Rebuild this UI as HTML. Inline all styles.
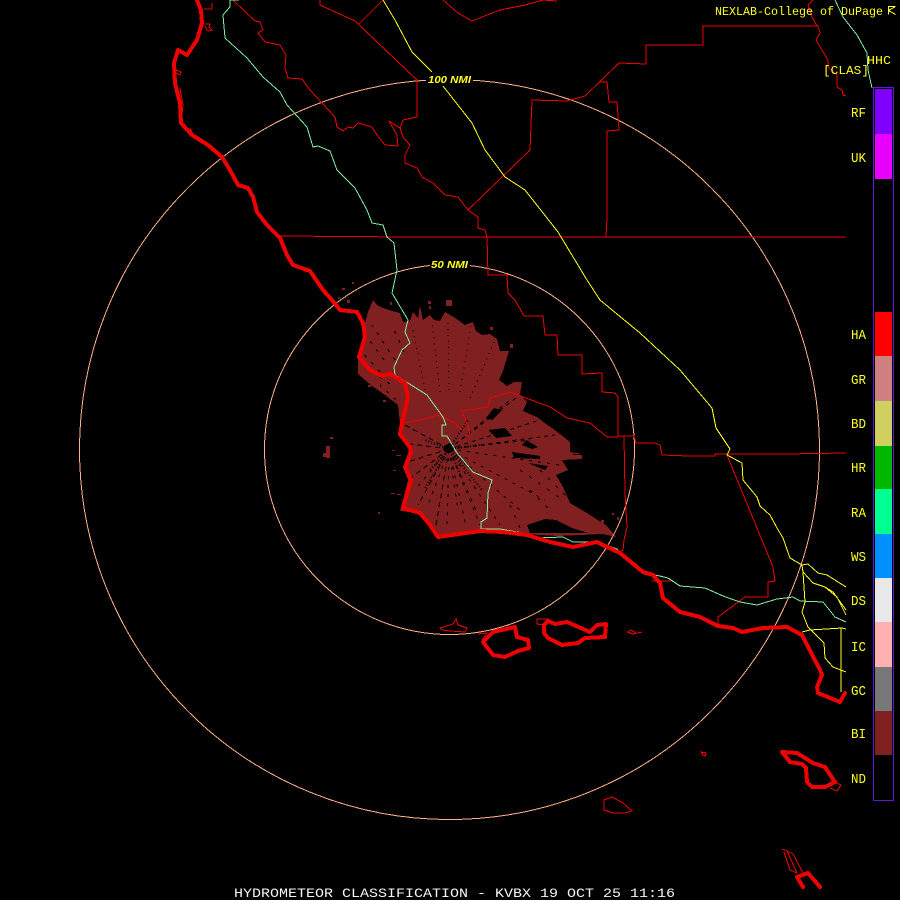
<!DOCTYPE html>
<html><head><meta charset="utf-8"><title>KVBX Hydrometeor Classification</title>
<style>html,body{margin:0;padding:0;background:#000;width:900px;height:900px;overflow:hidden}svg{display:block}
text{font-family:"Liberation Mono",monospace;fill:#ffff20}</style></head><body>
<svg width="900" height="900" viewBox="0 0 900 900" xmlns="http://www.w3.org/2000/svg">
<rect width="900" height="900" fill="#000"/>
<g shape-rendering="crispEdges">
<!-- blob -->
<path fill="#802020" d="M358 357L362 340L365 323L368 312L373 300L377 305L383 308L392 311L400 313L403 322L410 321L413 312L418 318L420 306L423 320L430 315L434 320L440 321L445 312L452 316L458 320L465 325L473 322L476 331L482 335L490 334L497 339L500 351L509 351L505 364L503 371L499 380L507 386L514 382L522 382L520 395L527 402L523 411L537 417L546 424L552 428L560 434L570 442L570 452L582 454L582 459L562 460L568 470L556 475L563 487L570 503L587 513L607 526L616 537L603 534L580 535L557 536L525 534L480 531L438 538L430 525L418 513L400 511L408 480L403 467L409 450L398 435L400 423L398 405L385 395L372 386L358 374Z"/>
<path fill="#802020" d="M347 300h3v3h-3zM342 288h3v2h-3zM352 282h2v2h-2zM338 297h2v2h-2zM428 301h3v3h-3zM446 300h6v6h-6zM390 302h2v3h-2zM429 306h2v3h-2zM490 327h3v3h-3zM510 344h3v4h-3zM326 446h4v12h-4zM323 453h7v4h-7zM330 437h3v2h-3zM601 520h3v3h-3zM617 517h2v3h-2zM612 513h2v2h-2zM392 378h3v2h-3zM362 375h2v2h-2zM368 385h3v2h-3zM383 400h3v2h-3zM392 450h3v1h-3zM393 470h3v1h-3zM397 494h4v1h-4zM378 512h2v2h-2zM396 455h5v1h-5zM391 493h4v1h-4z"/>
<!-- black gaps -->
<path fill="#000" d="M527 525L545 519L556 520L572 528L588 533L530 533ZM488 430L505 428L512 436L496 438ZM512 452L540 456L540 459L514 458ZM486 418L494 408L502 410L492 420ZM444 446l6-3 5 4-2 5-6 1-4-3zM526 440L538 447L532 449L522 445ZM528 463L548 466L545 470ZM582 454h-9v1h9z"/>
<g stroke="#000" stroke-width="1" fill="none">
<path stroke-dasharray="1 5" d="M449 390L448 318M460 392L471 325M470 398L495 340M440 392L432 322M425 390L412 325"/>
<path stroke-dasharray="3 7" d="M404 352L392 325M395 360L372 325M384 360L366 336M380 372L362 352M390 384L366 368M396 400L380 385"/>
<path stroke-dasharray="5 4" d="M449 449L403 443M449 449L405 425M449 449L407 462M449 449L408 480M449 449L418 505M449 449L436 525"/>
<path stroke-dasharray="3 6" d="M449 449L447 528M449 449L466 526M449 449L480 525M449 449L500 525M449 449L520 510M449 449L545 500M449 449L560 465M449 449L415 490M449 449L428 505M449 449L458 510M449 449L476 510"/>
<path stroke-dasharray="4 4" d="M449 449L530 440M449 449L510 400M449 449L540 420M449 449L555 435M449 449L520 395"/>
<path stroke-dasharray="1 2" stroke-width="2" d="M449 449L468 420M449 449L480 445M449 449L472 470M449 449L430 470M449 449L425 440M449 449L462 478M449 449L482 490M449 449L425 488"/>
<path stroke-dasharray="3 8" d="M540 470L575 505M520 470L560 498M510 505L520 528M530 490L550 510"/>
</g>
<!-- rings -->
<g fill="none" stroke="#ffb088" stroke-width="1">
<circle cx="449.5" cy="449.5" r="370"/>
<circle cx="449.5" cy="449.5" r="185"/>
</g>
<rect x="426" y="74" width="47" height="10" fill="#000"/>
<rect x="430" y="259" width="40" height="10" fill="#000"/>
<!-- thin red -->
<g fill="none" stroke="#f00000" stroke-width="1">
<path d="M320 0L320 5L355 21L417 80L417 117L403 120L400 128L403 137L410 145L405 155L405 163L417 168L422 177L433 183L445 195L458 197L468 210L478 217L478 228L485 230L487 237L488 275L507 275L508 293L515 300L524 316L543 316L545 335L557 335L558 355L582 355L582 374L602 373L602 392L615 393L618 397L618 436L634 436L636 443L655 443L660 445L662 455L688 456L715 456L715 454L785 454L846 453"/>
<path d="M233 0L255 21L260 22L263 30L258 33L265 42L280 45L286 55L285 68L288 78L302 79L310 90L335 117L337 127L343 131L348 127L353 128L358 123L372 127L377 135L385 145L398 146L397 135L389 121L400 128"/>
<path stroke="#b00000" d="M383 0L358 25"/>
<path d="M443 0L458 13L472 21L487 15L500 10L525 5L543 0L557 1"/>
<path d="M468 210L530 150L532 100L567 101L585 96L619 63L646 64L646 45L703 45L703 26L818 26L820 33L816 40L828 60L828 67L837 75L837 87L842 90L843 95L846 96"/>
<path d="M817 26L812 17L808 5L813 0"/>
<path d="M600 82L607 82L609 102L617 102L619 130L607 131L607 218L606 237"/>
<path d="M280 236L410 237L846 237"/>
<path d="M618 437L607 437L590 423L567 418L550 407L510 392L490 398L488 407L462 411L468 427L470 435L467 435"/>
<path d="M403 423L420 420L438 415L453 422L462 430"/>
<path d="M624 436L625 493L627 527L624 540L623 550L620 552"/>
<path d="M727 455L773 567L775 581L768 582L768 597L745 597L718 617L718 625"/>
<path d="M440 628L453 624L456 619L458 625L467 628L465 632L450 631L442 630Z"/>
<path d="M627 632L633 634L642 632M627 632L631 630L636 633"/>
<path d="M537 619L548 619L555 624M537 619L537 624L544 625M478 634L487 633L482 640"/>
<path d="M604 810L604 800L612 797L623 803L632 811L625 813L613 813Z"/>
<path d="M830 788L837 791L841 785L835 782"/>
<path d="M782 849L787 851L797 873M784 852L790 870L797 873M787 851L793 854L803 873"/>
<path d="M701 752L706 753L705 756L703 755Z"/>
<path d="M212 3L212 9L204 9M205 24L210 24L209 27L212 30L208 31L205 26"/>
<path d="M176 70L181 72L180 75L176 73M180 88L183 105L181 122M190 128L193 134"/>
<path d="M652 581L671 581"/>
</g>
<!-- green -->
<g fill="none" stroke="#80f0a0" stroke-width="1">
<path d="M239 0L230 0L230 7L223 15L225 38L247 58L263 77L280 92L287 105L307 127L313 147L318 146L330 151L337 170L355 188L367 210L372 223L383 225L387 237L394 243L397 270L392 293L408 320L405 332L410 343L402 350L394 367L395 375L408 383L427 395L443 417L446 425L442 425L442 436L447 436L457 453L473 472L492 480L488 493L487 518L481 522L481 529L500 529L523 533L537 538L563 537L573 542L597 542L617 549L643 572L668 578L680 586L705 588L723 596L740 602L757 605L777 599L793 597L800 601L823 602L835 617L846 622"/>
<path d="M835 0L843 17L857 35L867 53L868 70L872 88"/>
</g>
<!-- yellow -->
<g fill="none" stroke="#ffff20" stroke-width="1">
<path d="M383 0L395 20L412 52L432 72"/>
<path d="M443 86L472 123L485 150L505 177L525 190L558 232L587 280L600 300L640 333L680 370L712 408L716 428L730 449L727 455L742 463L743 480L757 497L760 506L770 515L777 528L783 538L790 558L802 565L803 572L813 583L825 587L837 597L846 615"/>
<path d="M802 565L808 564L818 573L827 575L846 587"/>
<path d="M825 587L833 592L846 610"/>
<path d="M803 572L805 602L802 612L808 627L824 643L825 658L833 667L846 672"/>
<path d="M802 632L810 630L842 628L846 629M841 628L841 692"/>
</g>
<!-- thick coast -->
<g fill="none" stroke="#f00000" stroke-width="4" stroke-linejoin="round" stroke-linecap="round">
<path d="M197 0L201 10L202 23L197 40L187 55L178 50L174 63L175 83L180 103L181 123L192 135L208 145L222 157L230 170L238 185L248 188L253 197L257 212L267 225L280 238L287 255L293 265L310 271L323 290L332 300L340 310L357 312L363 323L365 337L359 357L370 370L382 376L390 374L405 383L408 397L402 423L400 434L410 447L411 453L405 467L411 480L403 508L420 513L430 525L438 537L480 531L503 532L527 535L550 542L573 547L597 542L607 547L620 553L643 572L653 575L660 583L663 598L680 612L700 617L718 626L733 628L742 632L763 628L787 627L802 635L820 670L822 675L817 687L818 693L840 702L845 693"/>
<path d="M483 642L493 632L515 627L517 637L528 640L529 648L518 651L505 657L493 655Z"/>
<path d="M548 621L555 624L567 622L590 632L597 625L606 624L605 637L585 638L578 643L562 645L548 638L544 633L544 625Z"/>
<path d="M782 752L797 753L813 763L825 767L835 782L825 787L812 787L807 782L806 768L802 764L790 762Z"/>
<path d="M803 887L797 877L808 873L820 887"/>
</g>
<!-- colour bar -->
<rect x="875" y="89" width="17" height="45" fill="#8000ff"/>
<rect x="875" y="134" width="17" height="45" fill="#e800ff"/>
<rect x="875" y="312" width="17" height="44" fill="#ff0000"/>
<rect x="875" y="356" width="17" height="45" fill="#d08080"/>
<rect x="875" y="401" width="17" height="45" fill="#d0d060"/>
<rect x="875" y="446" width="17" height="43" fill="#00b800"/>
<rect x="875" y="489" width="17" height="45" fill="#00ff90"/>
<rect x="875" y="534" width="17" height="44" fill="#0090ff"/>
<rect x="875" y="578" width="17" height="44" fill="#e8e8e8"/>
<rect x="875" y="622" width="17" height="45" fill="#ffb0b0"/>
<rect x="875" y="667" width="17" height="44" fill="#787878"/>
<rect x="875" y="711" width="17" height="44" fill="#802020"/>
<rect x="873.5" y="87.5" width="20" height="713" fill="none" stroke="#6018d8" stroke-width="1"/>
<!-- logo -->
<path fill="none" stroke="#ffff20" stroke-width="1" d="M888.5 14.5V6.5H895.5M888.5 10.5L895.5 6.5M888.5 10.5L895.5 14.5"/>
</g>
<!-- text -->
<g font-size="12">
<text x="715" y="15" textLength="168" lengthAdjust="spacingAndGlyphs">NEXLAB-College of DuPage</text>
<text x="867" y="64" textLength="24" lengthAdjust="spacingAndGlyphs">HHC</text>
<text x="823" y="74" textLength="46" lengthAdjust="spacingAndGlyphs">[CLAS]</text>
<g font-size="14">
<text x="851" y="117" textLength="15" lengthAdjust="spacingAndGlyphs">RF</text>
<text x="851" y="162" textLength="15" lengthAdjust="spacingAndGlyphs">UK</text>
<text x="851" y="339" textLength="15" lengthAdjust="spacingAndGlyphs">HA</text>
<text x="851" y="384" textLength="15" lengthAdjust="spacingAndGlyphs">GR</text>
<text x="851" y="428" textLength="15" lengthAdjust="spacingAndGlyphs">BD</text>
<text x="851" y="472" textLength="15" lengthAdjust="spacingAndGlyphs">HR</text>
<text x="851" y="517" textLength="15" lengthAdjust="spacingAndGlyphs">RA</text>
<text x="851" y="561" textLength="15" lengthAdjust="spacingAndGlyphs">WS</text>
<text x="851" y="605" textLength="15" lengthAdjust="spacingAndGlyphs">DS</text>
<text x="851" y="651" textLength="15" lengthAdjust="spacingAndGlyphs">IC</text>
<text x="851" y="695" textLength="15" lengthAdjust="spacingAndGlyphs">GC</text>
<text x="851" y="738" textLength="15" lengthAdjust="spacingAndGlyphs">BI</text>
<text x="851" y="783" textLength="15" lengthAdjust="spacingAndGlyphs">ND</text>
</g>
<g font-weight="700" font-style="italic" font-size="10.5">
<text x="428" y="83" textLength="43" lengthAdjust="spacingAndGlyphs" style="font-family:'Liberation Sans',sans-serif">100 NMI</text>
<text x="431" y="268" textLength="37" lengthAdjust="spacingAndGlyphs" style="font-family:'Liberation Sans',sans-serif">50 NMI</text>
</g>
<text x="234" y="897" font-size="13" textLength="441" lengthAdjust="spacingAndGlyphs" style="fill:#f4f4f4">HYDROMETEOR CLASSIFICATION - KVBX 19 OCT 25 11:16</text>
</g>
</svg>
</body></html>
